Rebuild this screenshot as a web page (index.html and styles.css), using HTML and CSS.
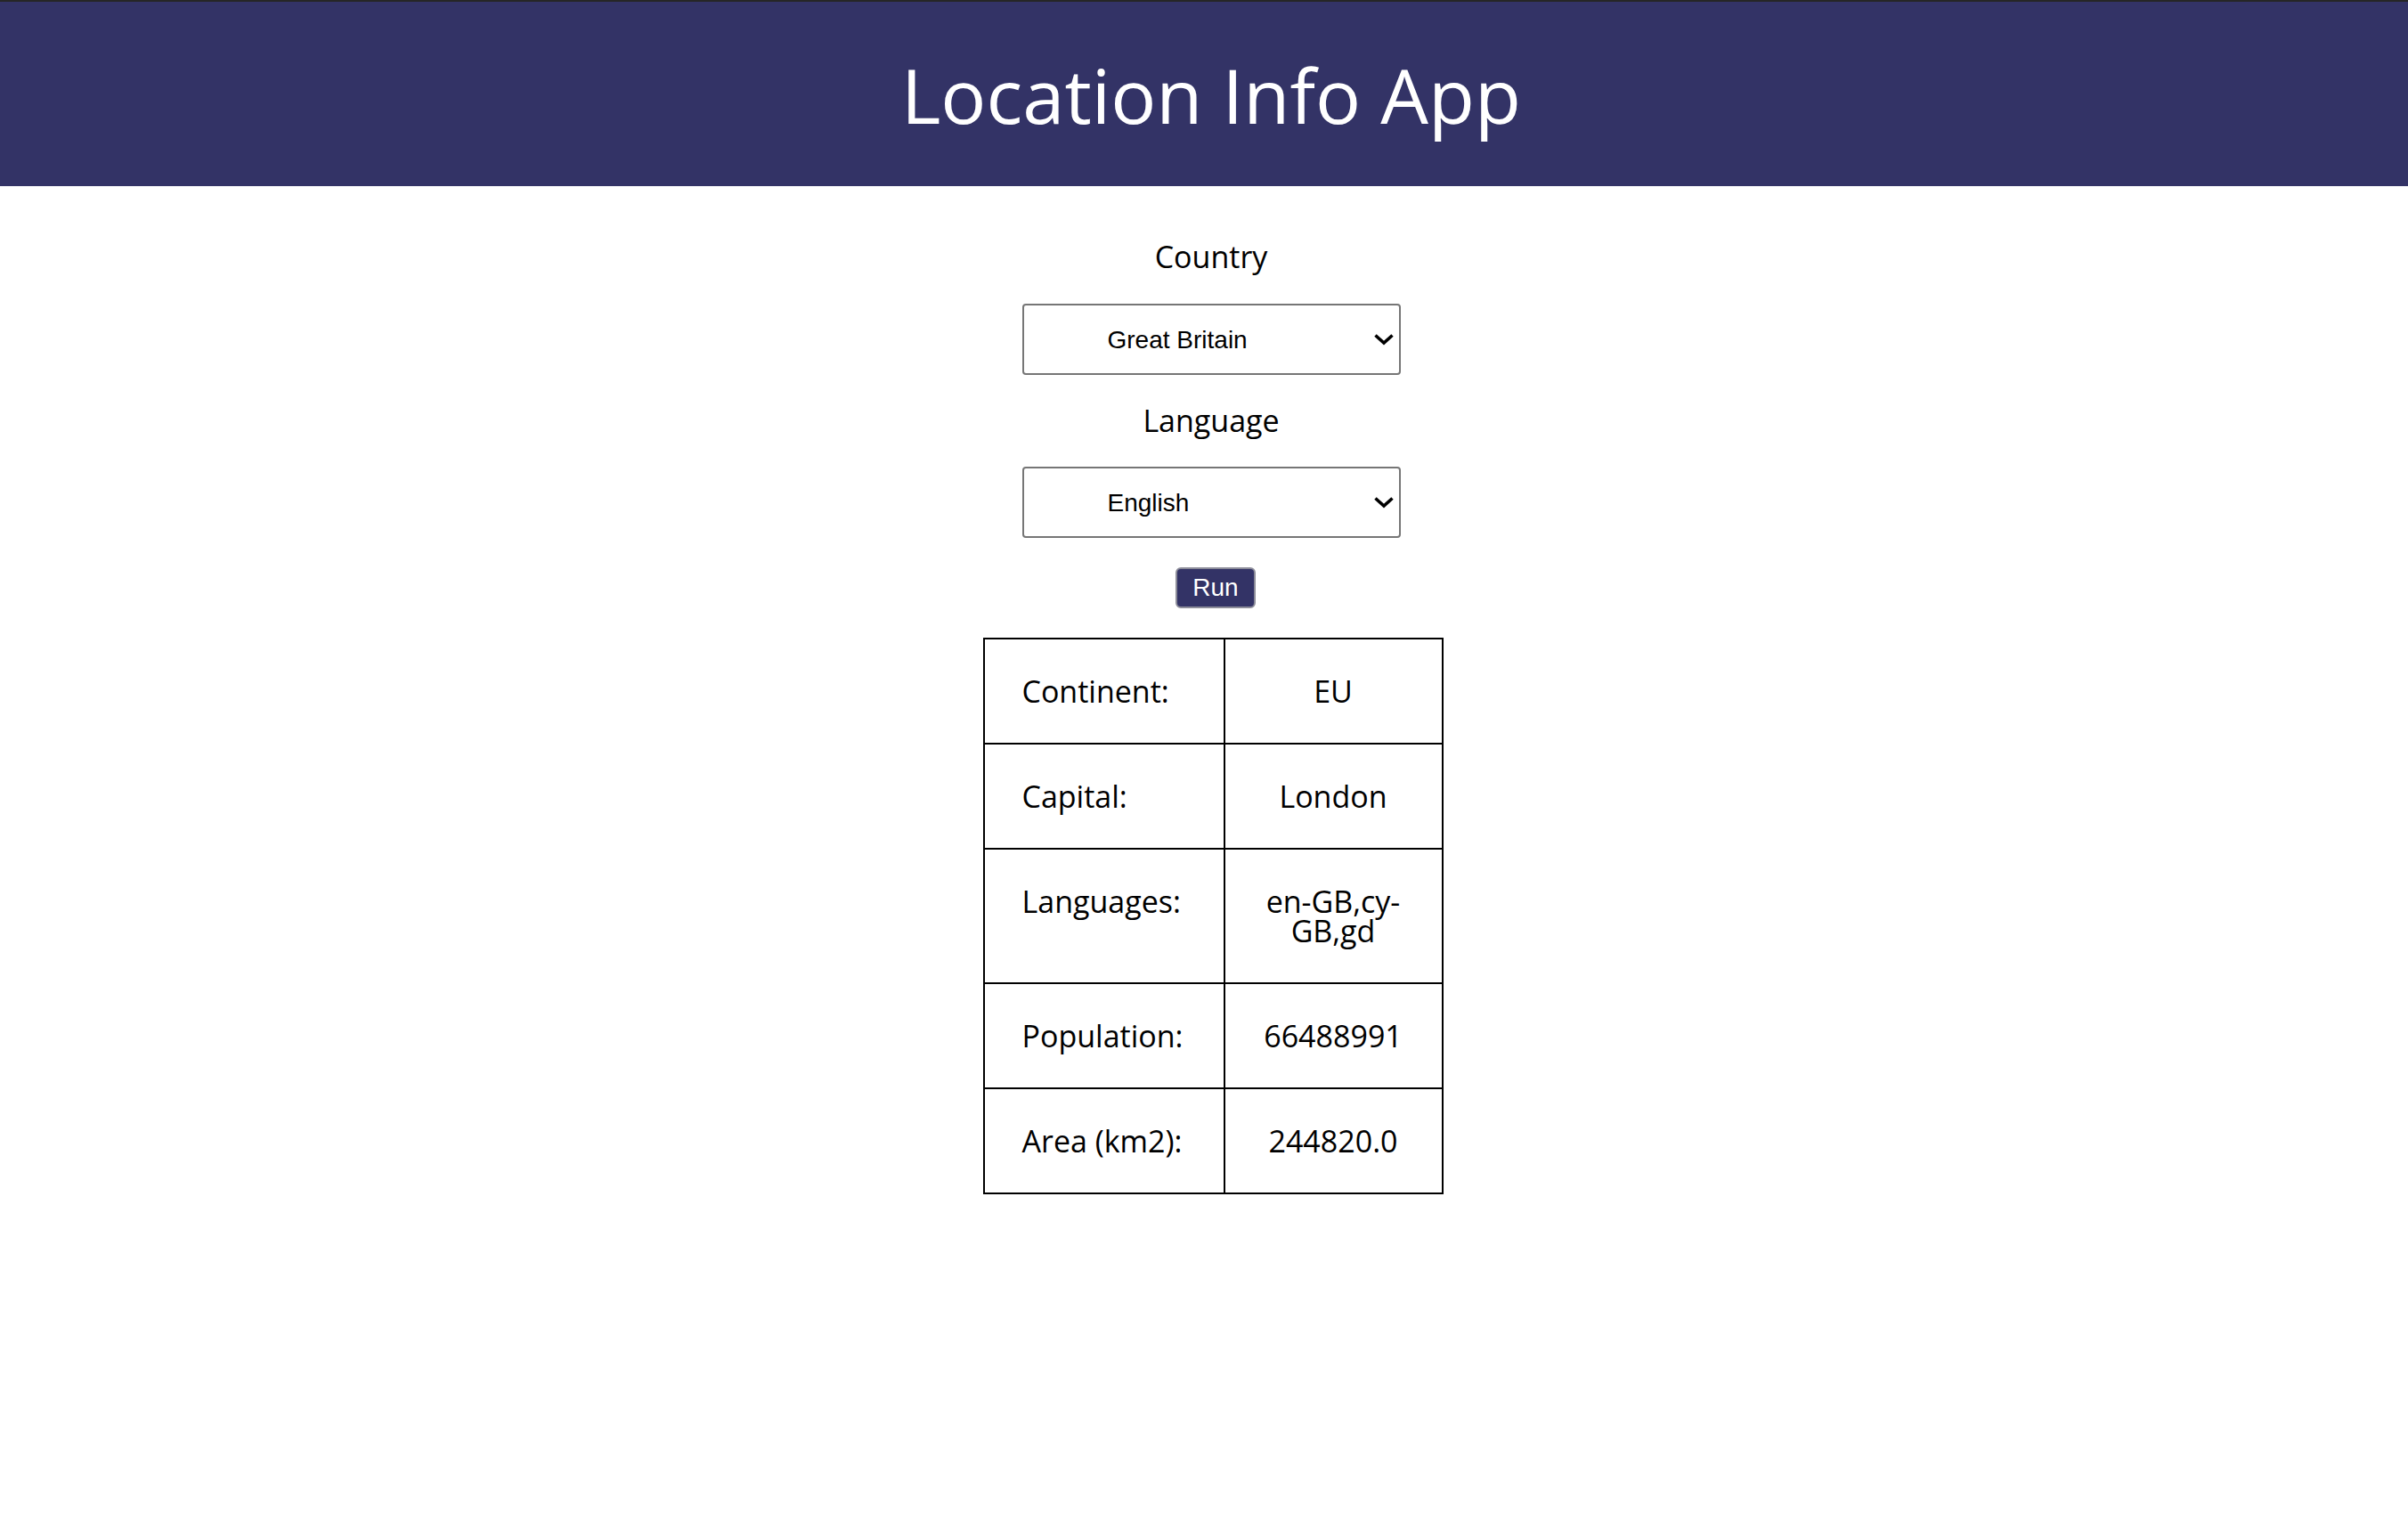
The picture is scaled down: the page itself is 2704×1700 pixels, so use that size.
FILE: index.html
```
<!DOCTYPE html>
<html lang="en">
<head>
<meta charset="utf-8">
<title>Location Info App</title>
<link rel="stylesheet" href="styles.css">
</head>
<body>
<header class="app-header">
  <h1 class="app-title">Location Info App</h1>
</header>
<main class="content">
  <label class="field-label" for="country">Country</label>
  <div class="select-wrap">
    <select id="country" class="field-select">
      <option>Great Britain</option>
    </select>
    <svg class="chevron" viewBox="0 0 24 14" width="24" height="14" aria-hidden="true"><path d="M2.5 2.5 L12 11 L21.5 2.5" fill="none" stroke="#000" stroke-width="3.6"/></svg>
  </div>
  <label class="field-label field-label--language" for="language">Language</label>
  <div class="select-wrap select-wrap--language">
    <select id="language" class="field-select">
      <option>English</option>
    </select>
    <svg class="chevron" viewBox="0 0 24 14" width="24" height="14" aria-hidden="true"><path d="M2.5 2.5 L12 11 L21.5 2.5" fill="none" stroke="#000" stroke-width="3.6"/></svg>
  </div>
  <button class="run-btn" type="button">Run</button>
  <table class="info-table">
    <tbody>
      <tr><td class="cell-label">Continent:</td><td class="cell-value">EU</td></tr>
      <tr><td class="cell-label">Capital:</td><td class="cell-value">London</td></tr>
      <tr><td class="cell-label">Languages:</td><td class="cell-value">en-GB,cy-GB,gd</td></tr>
      <tr><td class="cell-label">Population:</td><td class="cell-value">66488991</td></tr>
      <tr><td class="cell-label">Area (km2):</td><td class="cell-value">244820.0</td></tr>
    </tbody>
  </table>
</main>
</body>
</html>
```
FILE: styles.css
```
html, body {
  margin: 0;
  padding: 0;
  background: #ffffff;
}

body {
  font-family: "Open Sans", "Noto Sans", sans-serif;
  color: #000000;
}

.app-header {
  box-sizing: border-box;
  height: 209px;
  border-top: 2px solid #262626;
  background: #333366;
  display: flex;
  align-items: center;
  justify-content: center;
  padding-left: 16px;
}

.app-title {
  margin: 0;
  font-size: 85px;
  font-weight: 400;
  line-height: normal;
  color: #ffffff;
}

.content {
  display: flex;
  flex-direction: column;
  align-items: center;
  padding: 56px 0 0 16px;
}

.field-label {
  font-size: 34px;
  line-height: 46px;
}

.field-label--language {
  margin-top: 28px;
}

.select-wrap {
  position: relative;
  margin-top: 30px;
  width: 425px;
  height: 80px;
}

.select-wrap--language {
  margin-top: 29px;
}

.field-select {
  appearance: none;
  -webkit-appearance: none;
  box-sizing: border-box;
  width: 100%;
  height: 100%;
  margin: 0;
  padding: 0 0 0 94px;
  border: 2px solid #767676;
  border-radius: 4px;
  background: #ffffff;
  color: #000000;
  font-family: "Liberation Sans", Arial, sans-serif;
  font-size: 28px;
}

.chevron {
  position: absolute;
  right: 7px;
  top: 33px;
  pointer-events: none;
}

.run-btn {
  box-sizing: border-box;
  margin-top: 33px;
  margin-left: 10px;
  height: 46px;
  padding: 0 17px;
  background: #333366;
  color: #ffffff;
  border: 2px solid #8c8c99;
  border-radius: 6px;
  font-family: "Liberation Sans", Arial, sans-serif;
  font-size: 28px;
  line-height: 1;
}

.info-table {
  margin-top: 33px;
  margin-left: 4px;
  border-collapse: collapse;
  font-size: 34px;
  line-height: 33px;
}

.info-table td {
  border: 2px solid #000000;
  padding: 41.5px 40px;
  vertical-align: top;
}

.info-table td.cell-label {
  width: 186px;
  padding-left: 42px;
  text-align: left;
}

.cell-value {
  width: 163px;
  text-align: center;
}
```
